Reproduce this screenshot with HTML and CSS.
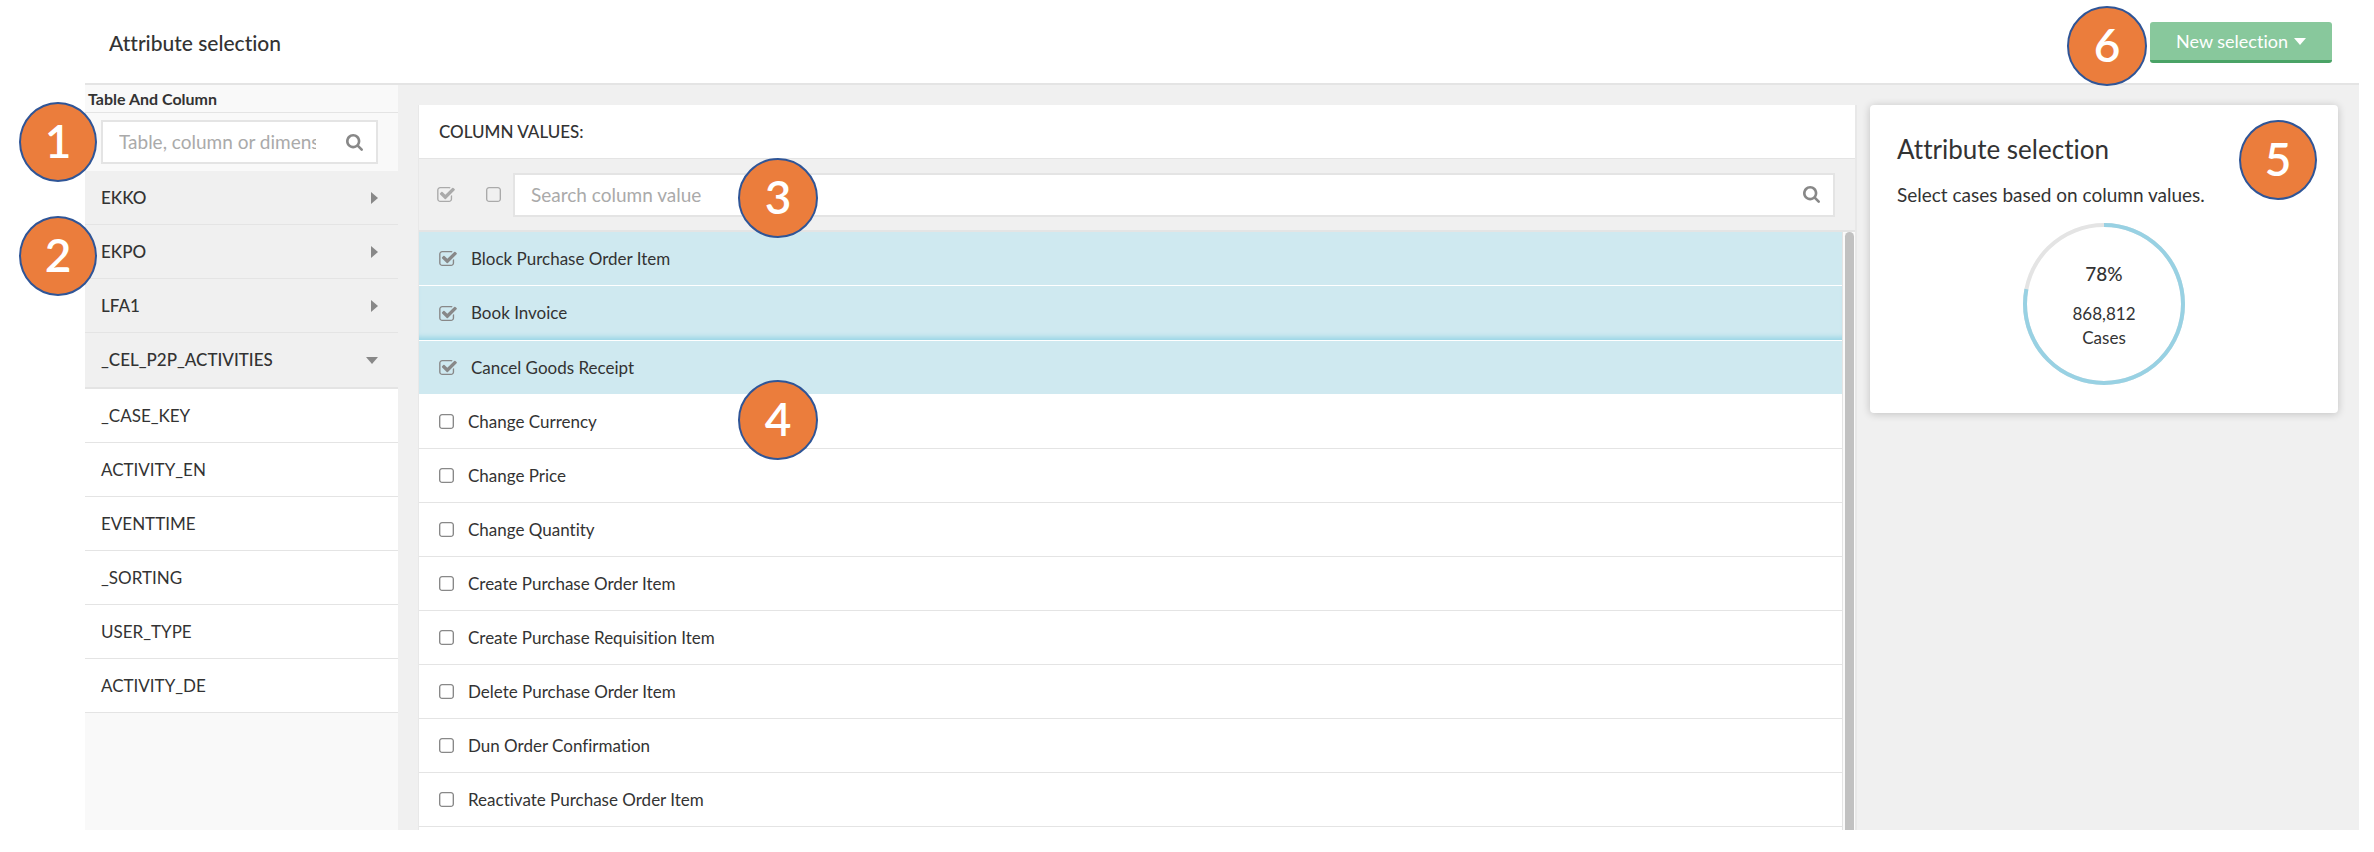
FILE: index.html
```html
<!DOCTYPE html>
<html lang="en">
<head>
    <meta charset="UTF-8">
    <meta name="viewport" content="width=device-width, initial-scale=1.0">
    <title>Attribute selection</title>
    <link rel="stylesheet" href="styles.css">
</head>
<body>
    <svg class="sprite" aria-hidden="true">
        <symbol id="checked" viewBox="64 128 1664 1408">
            <path d="M1472 930v318q0 119-84.500 203.500t-203.500 84.500h-832q-119 0-203.500-84.500t-84.500-203.500v-832q0-119 84.500-203.500t203.500-84.500h832q63 0 117 25 15 7 18 23 3 17-9 29l-49 49q-10 10-23 10-3 0-9-2-23-6-45-6h-832q-66 0-113 47t-47 113v832q0 66 47 113t113 47h832q66 0 113-47t47-113v-254q0-13 9-22l64-64q10-10 23-10 6 0 12 3 20 8 20 29zm231-489l-814 814q-24 24-57 24t-57-24l-430-430q-24-24-24-57t24-57l110-110q24-24 57-24t57 24l263 263 647-647q24-24 57-24t57 24l110 110q24 24 24 57t-24 57z"/>
        </symbol>
        <symbol id="unchecked" viewBox="192 128 1408 1408">
            <path d="M1312 256h-832q-66 0-113 47t-47 113v832q0 66 47 113t113 47h832q66 0 113-47t47-113v-832q0-66-47-113t-113-47zm288 160v832q0 119-84.500 203.500t-203.500 84.500h-832q-119 0-203.500-84.500t-84.500-203.500v-832q0-119 84.500-203.500t203.500-84.500h832q119 0 203.500 84.500t84.500 203.500z"/>
        </symbol>
        <symbol id="search" viewBox="64 128 1664 1664">
            <path d="M1216 832q0-185-131.500-316.500t-316.500-131.500-316.500 131.500-131.500 316.500 131.500 316.500 316.500 131.500 316.500-131.500 131.500-316.500zm512 832q0 52-38 90t-90 38q-54 0-90-38l-343-342q-179 124-399 124-143 0-273.500-55.500t-225-150-150-225-55.500-273.500 55.500-273.500 150-225 225-150 273.500-55.500 273.500 55.500 225 150 150 225 55.500 273.500q0 220-124 399l343 343q37 37 37 90z"/>
        </symbol>
        <symbol id="caret-right" viewBox="0 0 7 12"><path d="M0 0l7 6-7 6z"/></symbol>
        <symbol id="caret-down" viewBox="0 0 12 7"><path d="M0 0h12l-6 7z"/></symbol>
    </svg>

    <div class="app">
        <header class="topbar">
            <h1>Attribute selection</h1>
            <div class="actions">
                <span class="badge badge-6">6</span>
                <button class="new-selection" type="button">New selection <svg class="caret-down"><use href="#caret-down"/></svg></button>
            </div>
        </header>

        <div class="workspace">
            <aside class="sidebar">
                <h2>Table And Column</h2>
                <div class="sidebar-search">
                    <div class="search-box">
                        <input type="text" placeholder="Table, column or dimension" aria-label="Table, column or dimension">
                        <svg><use href="#search"/></svg>
                    </div>
                </div>
                <span class="badge badge-1">1</span>
                <span class="badge badge-2">2</span>
                <nav class="tables">
                    <button class="table" type="button">EKKO <svg class="caret-right"><use href="#caret-right"/></svg></button>
                    <button class="table" type="button">EKPO <svg class="caret-right"><use href="#caret-right"/></svg></button>
                    <button class="table" type="button">LFA1 <svg class="caret-right"><use href="#caret-right"/></svg></button>
                    <button class="table open" type="button">_CEL_P2P_ACTIVITIES <svg class="caret-down"><use href="#caret-down"/></svg></button>
                    <button class="column" type="button">_CASE_KEY</button>
                    <button class="column" type="button">ACTIVITY_EN</button>
                    <button class="column" type="button">EVENTTIME</button>
                    <button class="column" type="button">_SORTING</button>
                    <button class="column" type="button">USER_TYPE</button>
                    <button class="column" type="button">ACTIVITY_DE</button>
                </nav>
            </aside>

            <main class="values">
                <h2>COLUMN VALUES:</h2>
                <div class="toolbar">
                    <label class="check"><input type="checkbox" checked aria-label="Select all"><svg class="on"><use href="#checked"/></svg></label>
                    <label class="check"><input type="checkbox" aria-label="Deselect all"><svg><use href="#unchecked"/></svg></label>
                    <div class="search-box">
                        <input type="text" placeholder="Search column value" aria-label="Search column value">
                        <svg><use href="#search"/></svg>
                    </div>
                </div>
                <span class="badge badge-3">3</span>
                <span class="badge badge-4">4</span>
                <div class="list">
                    <div class="rows">
                        <label class="check row selected"><input type="checkbox" checked><svg class="on"><use href="#checked"/></svg>Block Purchase Order Item</label>
                        <label class="check row selected current"><input type="checkbox" checked><svg class="on"><use href="#checked"/></svg>Book Invoice</label>
                        <label class="check row selected"><input type="checkbox" checked><svg class="on"><use href="#checked"/></svg>Cancel Goods Receipt</label>
                        <label class="check row"><input type="checkbox"><svg><use href="#unchecked"/></svg>Change Currency</label>
                        <label class="check row"><input type="checkbox"><svg><use href="#unchecked"/></svg>Change Price</label>
                        <label class="check row"><input type="checkbox"><svg><use href="#unchecked"/></svg>Change Quantity</label>
                        <label class="check row"><input type="checkbox"><svg><use href="#unchecked"/></svg>Create Purchase Order Item</label>
                        <label class="check row"><input type="checkbox"><svg><use href="#unchecked"/></svg>Create Purchase Requisition Item</label>
                        <label class="check row"><input type="checkbox"><svg><use href="#unchecked"/></svg>Delete Purchase Order Item</label>
                        <label class="check row"><input type="checkbox"><svg><use href="#unchecked"/></svg>Dun Order Confirmation</label>
                        <label class="check row"><input type="checkbox"><svg><use href="#unchecked"/></svg>Reactivate Purchase Order Item</label>
                    </div>
                    <div class="scrollbar"><div class="thumb"></div></div>
                </div>
            </main>

            <section class="card">
                <span class="badge badge-5">5</span>
                <h2>Attribute selection</h2>
                <p>Select cases based on column values.</p>
                <div class="donut">
                    <svg viewBox="0 0 162 162">
                        <circle class="track" cx="81" cy="81" r="79"/>
                        <circle class="share" cx="81" cy="81" r="79" pathLength="100" stroke-dasharray="78 22"/>
                    </svg>
                    <div class="donut-text">
                        <strong>78%</strong>
                        <span>868,812</span>
                        <span>Cases</span>
                    </div>
                </div>
            </section>
        </div>
    </div>
</body>
</html>
```
FILE: styles.css
```css
* {
    box-sizing: border-box;
}
body {
    margin: 0;
    background: #fff;
    color: #333;
    font-family: Lato, "Open Sans", sans-serif;
    font-size: 18px;
    font-variant-ligatures: none;
    line-height: 24px;
}
h1, h2, p {
    margin: 0;
    font-weight: 400;
}
button, input {
    font: inherit;
    font-variant-ligatures: none;
    color: inherit;
}
svg {
    fill: #888;
    flex: none;
}
.sprite {
    display: none;
}
.app {
    display: flex;
    flex-direction: column;
    height: 100vh;
    padding: 0 15px 22px 85px;
}
.caret-right {
    width: 7px;
    height: 12px;
}
.caret-down {
    width: 12px;
    height: 7px;
}

/* top bar */
.topbar {
    display: flex;
    justify-content: space-between;
    align-items: center;
    height: 85px;
    padding: 2px 27px 0 24px;
    border-bottom: 2px solid #e4e4e4;
}
.topbar h1 {
    font-size: 21px;
    font-weight: 500;
}
.actions {
    display: flex;
    align-items: center;
    position: relative;
}
.new-selection {
    display: flex;
    align-items: center;
    gap: 6px;
    height: 41px;
    padding: 0 26px;
    border: 0;
    border-bottom: 3px solid #4aa366;
    border-radius: 3px;
    background: #88c89c;
    color: #fff;
}
.new-selection svg {
    fill: #fff;
}

/* sidebar */
.workspace {
    display: flex;
    flex: 1;
    min-height: 0;
    background: #f0f0f0;
}
.sidebar {
    position: relative;
    width: 313px;
    background: #f9f9f9;
}
.sidebar h2 {
    height: 28px;
    padding-left: 3px;
    border-bottom: 1px solid #e4e4e4;
    font-size: 16px;
    font-weight: 700;
    line-height: 28px;
}
.sidebar-search {
    padding: 7px 20px 7px 16px;
}
.search-box {
    display: flex;
    align-items: center;
    height: 44px;
    padding: 0 13px 0 16px;
    border: 2px solid #e4e4e4;
    background: #fff;
}
.search-box input {
    flex: 1;
    min-width: 0;
    margin-right: 30px;
    padding: 0;
    border: 0;
    outline: 0;
    background: none;
    font-size: 19px;
}
.search-box input::placeholder {
    color: #aaa;
}
.search-box svg {
    width: 17px;
    height: 17px;
}
.table, .column {
    display: flex;
    justify-content: space-between;
    align-items: center;
    width: 100%;
    height: 54px;
    padding: 0 20px 0 16px;
    border: 0;
    border-bottom: 1px solid #e4e4e4;
    background: #f0f0f0;
    font-size: 17px;
}
.table {
    font-weight: 500;
}
.open {
    height: 56px;
    border-bottom: 2px solid #e4e4e4;
}
.column {
    background: #fff;
}

/* column values */
.values {
    display: flex;
    flex-direction: column;
    position: relative;
    flex: 1;
    margin: 20px 13px 0 20px;
    border-right: 2px solid #e8e8e8;
    border-left: 1px solid #e8e8e8;
}
.values h2 {
    height: 54px;
    padding-left: 20px;
    border-bottom: 1px solid #e4e4e4;
    background: #fff;
    font-size: 17px;
    font-weight: 500;
    line-height: 54px;
}
.toolbar {
    display: flex;
    align-items: center;
    height: 73px;
    padding: 0 20px 0 18px;
    border-bottom: 2px solid #e4e4e4;
}
.toolbar .check {
    margin-right: 31px;
}
.toolbar .check + .check {
    margin-right: 12px;
}
.toolbar .check svg {
    fill: #aaa;
}
.toolbar .search-box {
    flex: 1;
}
.check {
    display: flex;
    align-items: center;
}
.check input {
    position: absolute;
    opacity: 0;
}
.check svg {
    width: 15px;
    height: 15px;
}
.check .on {
    width: 18px;
}
.list {
    display: flex;
    flex: 1;
    min-height: 0;
}
.rows {
    flex: 1;
    overflow: hidden;
    background: #fff;
}
.row {
    gap: 14px;
    height: 54px;
    padding-left: 20px;
    border-bottom: 1px solid #e4e4e4;
    font-size: 17px;
}
.selected {
    border-bottom-color: #fff;
    background: #cfe9f0;
}
.current {
    height: 55px;
    box-shadow: inset 0 -6px 5px -3px #9ad6e6;
}
.scrollbar {
    width: 13px;
    padding: 0 2px;
    border-left: 1px solid #e4e4e4;
    background: #fafafa;
}
.thumb {
    width: 9px;
    height: 100%;
    border-radius: 5px 5px 0 0;
    background: #c1c1c1;
}

/* summary card */
.card {
    position: relative;
    align-self: flex-start;
    width: 468px;
    height: 308px;
    margin: 20px 21px 0 0;
    padding: 27px;
    border-radius: 4px;
    background: #fff;
    box-shadow: 0 1px 8px rgba(0, 0, 0, 0.2);
}
.card h2 {
    font-size: 26px;
    line-height: 34px;
}
.card p {
    margin-top: 17px;
    font-size: 19px;
}
.donut {
    display: grid;
    width: 162px;
    height: 162px;
    margin: 16px auto 0;
}
.donut svg, .donut-text {
    grid-area: 1 / 1;
}
.donut circle {
    fill: none;
    stroke: #e4e4e4;
    stroke-width: 4;
}
.donut .share {
    stroke: #98d1e3;
    transform: rotate(-90deg);
    transform-origin: center;
}
.donut-text {
    display: flex;
    flex-direction: column;
    align-items: center;
    padding-top: 39px;
    font-size: 17px;
}
.donut-text strong {
    margin-bottom: 16px;
    font-size: 19px;
    font-weight: 500;
}

/* numbered markers */
.badge {
    position: absolute;
    z-index: 1;
    width: 80px;
    height: 80px;
    border: 2px solid #2f5597;
    border-radius: 50%;
    background: #eb7d3c;
    color: #fff;
    font-size: 46px;
    font-weight: 600;
    line-height: 74px;
    text-align: center;
}
.badge-1, .badge-2, .badge-5 {
    width: 78px;
}
.badge-1 {
    top: 17px;
    left: -66px;
}
.badge-2 {
    top: 131px;
    left: -66px;
}
.badge-3 {
    top: 53px;
    left: 319px;
}
.badge-4 {
    top: 275px;
    left: 319px;
}
.badge-5 {
    top: 15px;
    right: 21px;
}
.badge-6 {
    top: -16px;
    right: 185px;
}
```
